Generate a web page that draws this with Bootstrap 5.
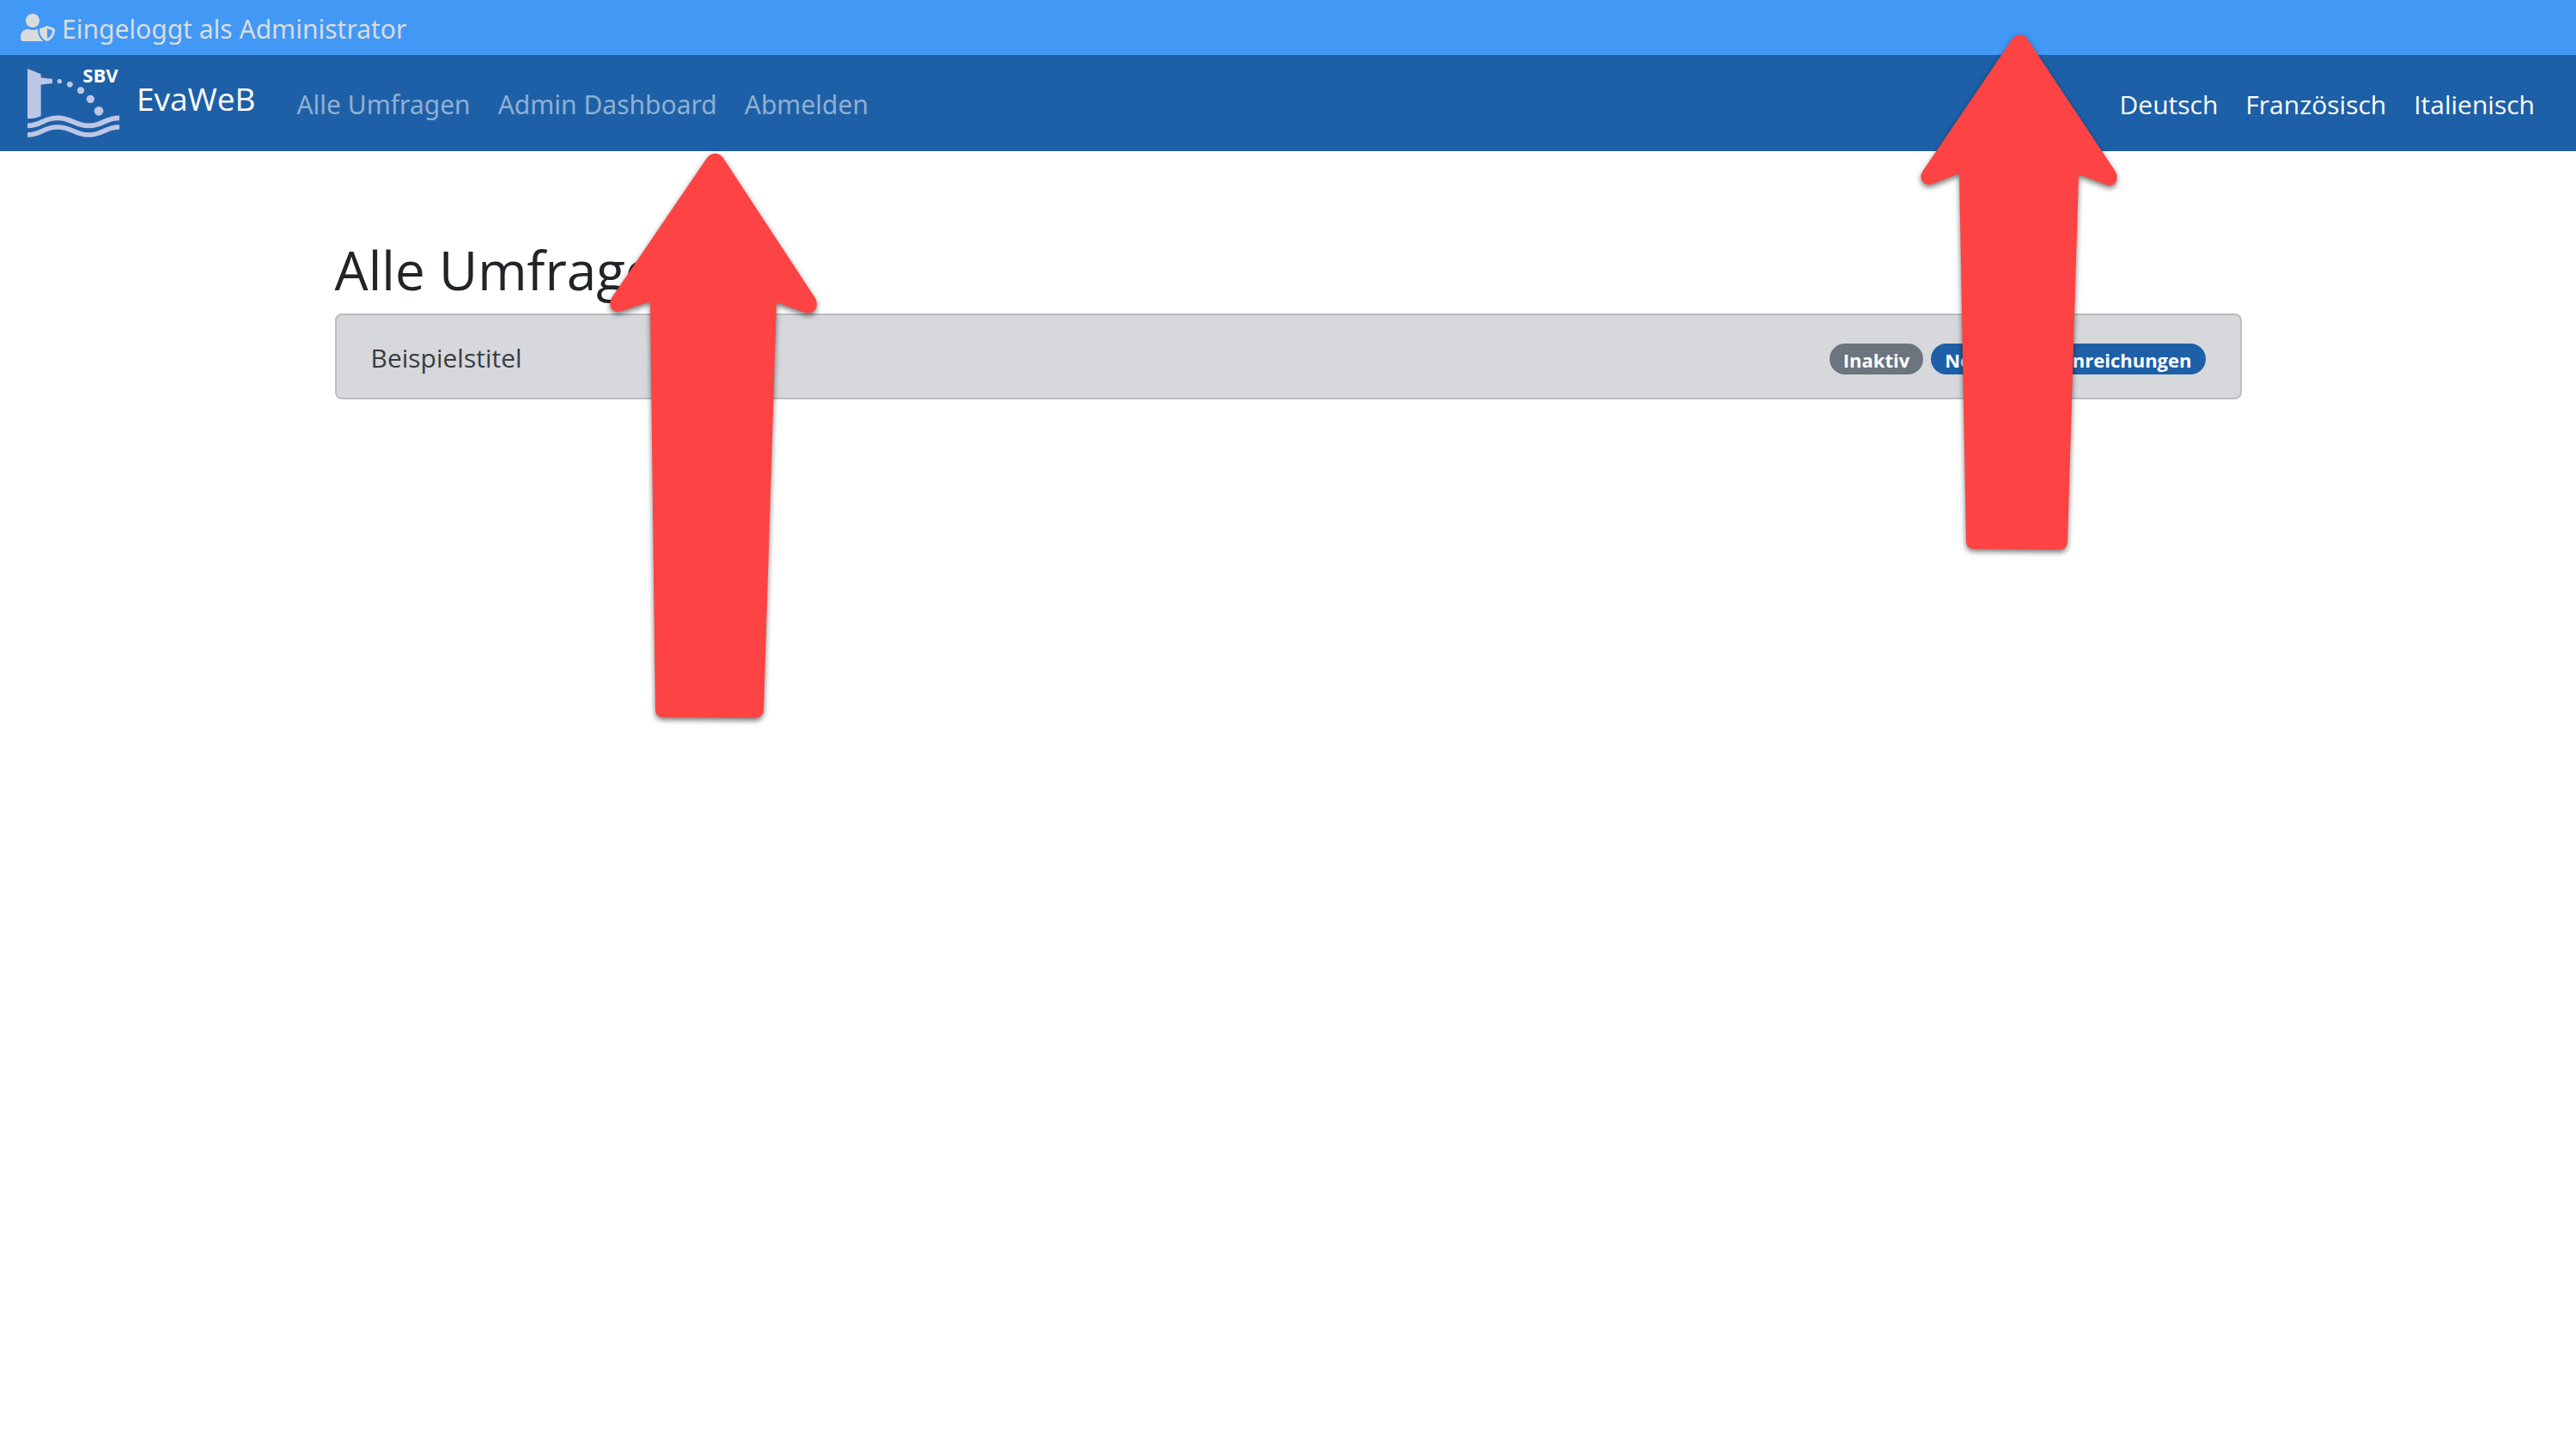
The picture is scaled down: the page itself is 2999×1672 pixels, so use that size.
<!DOCTYPE html>
<html lang="de">
<head>
<meta charset="utf-8">
<meta name="viewport" content="width=device-width, initial-scale=1">
<title>EvaWeB – Alle Umfragen</title>
<link href="https://cdn.jsdelivr.net/npm/bootstrap@5.3.0/dist/css/bootstrap.min.css" rel="stylesheet">
<style>
:root { font-size: 32px; }
body { font-family: "Open Sans", "Noto Sans", sans-serif; font-size: 30px; line-height: 48px; color: #212529; background: #fff; }
.status-bar, .page-nav { font-family: "Noto Sans", "Open Sans", sans-serif; }
.status-bar { background: #4298f5; color: #d9dcde; padding: 10px 24px 6px; gap: 8px; }
.status-bar svg { width: 40px; height: 32px; margin-bottom: 4px; }
.main-nav { background: #1e60a7; padding: 16px 32px; }
.main-nav .navbar-brand { font-size: 37px; line-height: 70px; color: #fff; padding: 0; margin-right: 32px; gap: 20px; }
.main-nav .navbar-brand svg { width: 107px; height: 80px; overflow: visible; }
.main-nav .nav-link { padding: 18px 16px 14px; line-height: 48px; color: rgba(255,255,255,.5); }
.main-nav .nav-link:hover { color: rgba(255,255,255,.75); }
.main-nav .lang-nav .nav-link { color: #fff; }
.page-body { max-width: 2280px; padding: 100px 30px; }
.page-body h1 { font-size: 62px; line-height: 77px; font-weight: 400; margin-bottom: 12px; }
.survey-list { border-radius: 8px; }
.survey-list .list-group-item { background: #d6d8db; color: #383d41; border: 2px solid #bbbdc0; padding: 26px 40px 22px; }
.status-badges { gap: 9px; padding-top: 2px; }
.survey-list .badge { font-size: 22px; line-height: 24px; padding: 7px 16px 5px; }
.badge-blue { background: #1e60a7; }
.pointer-arrow { position: absolute; fill: #fd4343; overflow: visible; pointer-events: none; filter: drop-shadow(0 3px 3px rgba(0,0,0,.55)); }
.pointer-nav { left: 700px; top: 170px; width: 260px; height: 680px; }
.pointer-bar { left: 2226px; top: 30px; width: 250px; height: 620px; }
</style>
<script src="https://cdn.jsdelivr.net/npm/bootstrap@5.3.0/dist/js/bootstrap.bundle.min.js"></script>
</head>
<body class="position-relative min-vh-100">
<div class="status-bar d-flex align-items-center">
  <svg viewBox="0 0 640 512" fill="currentColor" aria-hidden="true"><path d="M622.3 271.1l-115.2-45c-4.1-1.6-12.6-3.7-22.2 0l-115.2 45c-10.7 4.2-17.7 14-17.7 24.9 0 111.6 68.7 188.8 132.9 213.9 9.6 3.7 18 1.6 22.2 0C558.4 489.9 640 420.5 640 296c0-10.9-7-20.7-17.7-24.9zM496 462.4V273.3l95.5 37.3c-5.6 87.1-60.9 135.4-95.5 151.8zM224 256c70.7 0 128-57.3 128-128S294.7 0 224 0 96 57.3 96 128s57.3 128 128 128zm96 40c0-2.5.8-4.8 1.1-7.2-2.5-.1-4.9-.8-7.5-.8h-16.7c-22.2 10.2-46.9 16-72.9 16s-50.6-5.8-72.9-16h-16.7C60.2 288 0 348.2 0 422.4V464c0 26.5 21.5 48 48 48h352c6.8 0 13.3-1.5 19.2-4-54-42.9-99.2-116.7-99.2-212z"/></svg>
  <span>Eingeloggt als Administrator</span>
</div>
<nav class="navbar navbar-expand main-nav" aria-label="Hauptnavigation">
  <a class="navbar-brand d-flex align-items-start" href="#">
    <svg viewBox="0 0 321 240" aria-hidden="true">
      <g fill="#bec6e6">
        <path d="M0 0L47 19V165Q28 175 0 175Z"/>
        <path d="M45 31L87 36V51L45 56Z"/>
        <circle cx="112" cy="44" r="8"/><circle cx="148" cy="55" r="10"/><circle cx="186" cy="76" r="12"/><circle cx="220" cy="106" r="14"/><circle cx="249" cy="148" r="16"/>
      </g>
      <g fill="none" stroke="#bec6e6" stroke-width="17">
        <path d="M0 199C52 199 52 172 105 172S162 199 214 199S268 172 321 172"/>
        <path d="M0 231C52 231 52 204 105 204S162 231 214 231S268 204 321 204"/>
      </g>
      <text x="193" y="47" fill="#fff" font-size="66" font-weight="700">SBV</text>
    </svg>
    <span>EvaWeB</span>
  </a>
  <ul class="navbar-nav page-nav me-auto">
    <li class="nav-item"><a class="nav-link" href="#">Alle Umfragen</a></li>
    <li class="nav-item"><a class="nav-link" href="#">Admin Dashboard</a></li>
    <li class="nav-item"><a class="nav-link" href="#">Abmelden</a></li>
  </ul>
  <ul class="navbar-nav lang-nav">
    <li class="nav-item"><a class="nav-link" href="#">Deutsch</a></li>
    <li class="nav-item"><a class="nav-link" href="#">Französisch</a></li>
    <li class="nav-item"><a class="nav-link" href="#">Italienisch</a></li>
  </ul>
</nav>
<main class="container page-body">
  <h1>Alle Umfragen</h1>
  <div class="list-group survey-list">
    <a class="list-group-item list-group-item-action d-flex justify-content-between align-items-center" href="#">
      <span>Beispielstitel</span>
      <span class="d-flex status-badges">
        <span class="badge rounded-pill text-bg-secondary">Inaktiv</span>
        <span class="badge rounded-pill badge-blue">Noch keine Einreichungen</span>
      </span>
    </a>
  </div>
</main>
<svg class="pointer-arrow pointer-nav" viewBox="0 0 260 680" aria-hidden="true"><path d="M123 14C128 7 137 7 142 14L249 177C254 186 249 197 237 194L204 182L189 657Q188 665 180 666L72 665Q64 665 63 657L57 181L24 192C14 196 7 187 12 177Z"/></svg>
<svg class="pointer-arrow pointer-bar" viewBox="0 0 250 620" aria-hidden="true"><path d="M117 15C122 9 130 9 134 15L237 170C241 178 237 189 226 185L194 173L181 601Q180 610 172 610L72 609Q64 609 63 601L55 172L24 184C14 188 7 178 12 170Z"/></svg>
</body>
</html>
